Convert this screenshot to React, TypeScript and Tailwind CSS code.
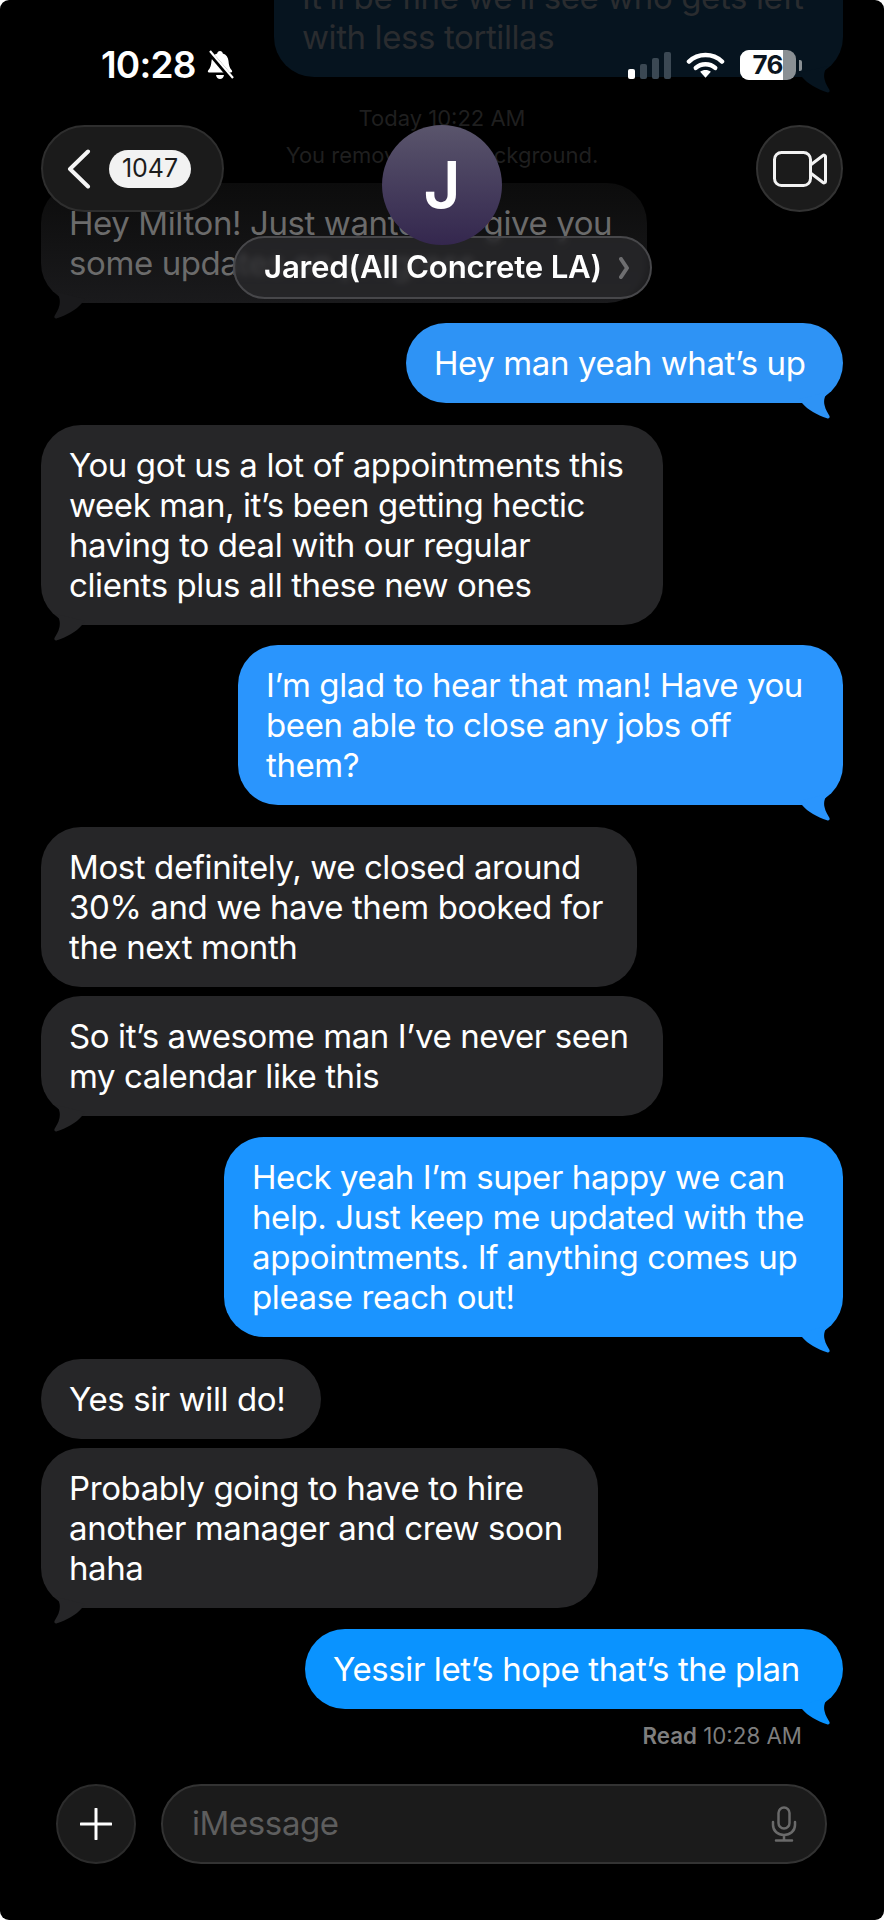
const FONT = "font-['Inter','Noto_Sans',sans-serif]";

function Tail({ side, color }: { side: "left" | "right"; color: string }) {
  return (
    <svg
      viewBox="0 0 46 34"
      className={`absolute bottom-[-16px] h-[34px] w-[46px] ${
        side === "right" ? "right-0" : "left-0 -scale-x-100"
      }`}
      fill={color}
    >
      <path d="M2 14 L31 7 C27.5 11 26.5 15 27.5 20 C28.5 25 31 28 32.5 31 C33.2 33 31.5 33.8 30 33.2 C20 30 11 25 5 18 Z" />
    </svg>
  );
}

function Bubble({
  side,
  width,
  bg,
  color,
  lines,
  tail = true,
}: {
  side: "left" | "right";
  width: string;
  bg: string;
  color: string;
  lines: string[];
  tail?: boolean;
}) {
  return (
    <div
      className={`relative rounded-[40px] py-5 pl-[28px] text-[33px] leading-[40px] tracking-[-0.4px] text-white ${width} ${bg} ${
        side === "right" ? "self-end" : "self-start"
      }`}
    >
      {lines.map((l) => (
        <div key={l} className="whitespace-nowrap">
          {l}
        </div>
      ))}
      {tail && <Tail side={side} color={color} />}
    </div>
  );
}

function StatusBar() {
  return (
    <div className="absolute left-0 right-0 top-[50px] flex h-[30px] items-center pl-[101px] pr-[82px]">
      <span className="text-[37px] font-semibold leading-[30px] tracking-[-0.8px] text-white">10:28</span>
      <svg viewBox="0 0 28 30" className="ml-[10px] h-[30px] w-[28px]" fill="white">
        <path d="M14 1c1.6 0 2.6 1 2.8 2.5 3.5 1 5.4 4 5.7 7.6.3 4 1 6.8 3.4 9.4.6.7.2 2-.9 2H3c-1.100 0-1.500-1.300-.9-2 2.400-2.600 3.100-5.400 3.400-9.400.3-3.600 2.200-6.600 5.700-7.600C11.400 2 12.400 1 14 1z" />
        <path d="M10 25h8c-.4 2.400-2 4-4 4s-3.600-1.600-4-4z" />
        <path d="M3 2 L26 29" stroke="black" strokeWidth="5" />
        <path d="M4 1 L27 28" stroke="white" strokeWidth="2.200" />
      </svg>
      <div className="ml-auto flex h-[28px] items-end gap-[5px]">
        <span className="h-[10px] w-[7px] rounded-[2px] bg-white" />
        <span className="h-[15px] w-[7px] rounded-[2px] bg-[#3b4853]" />
        <span className="h-[21px] w-[7px] rounded-[2px] bg-[#3b4853]" />
        <span className="h-[27px] w-[7px] rounded-[2px] bg-[#3b4853]" />
      </div>
      <svg viewBox="0 0 40 28" className="ml-[15px] h-[28px] w-[39px]" fill="none" stroke="white" strokeLinecap="round">
        <path d="M3 10.500C12.500 1.500 27.500 1.500 37 10.500" strokeWidth="4.500" />
        <path d="M10 17C15.500 12 24.500 12 30 17" strokeWidth="4.500" />
        <path d="M20 27l-5.500-6c3.200-2.400 7.800-2.400 11 0z" fill="white" stroke="none" />
      </svg>
      <div className="relative ml-[15px] flex h-[30px] w-[56px] items-center overflow-hidden rounded-[9px] bg-[#8a9094]">
        <div className="flex h-full w-[43px] items-center justify-end bg-white">
          <span className="text-[26px] font-bold leading-none tracking-[-0.5px] text-[#0b1520]">76</span>
        </div>
      </div>
      <span className="ml-[3px] h-[11px] w-[3px] rounded-r-[2px] bg-[#8a9094]" />
    </div>
  );
}

function Header() {
  return (
    <>
      <div className="absolute left-[41px] top-[125px] flex h-[87px] w-[183px] items-center rounded-full border-2 border-[#2e2e2e] bg-[#1b1b1b] pl-[24px]">
        <svg viewBox="0 0 24 40" className="h-[40px] w-[24px]" fill="none" stroke="#f5f5f5" strokeWidth="4" strokeLinecap="round" strokeLinejoin="round">
          <path d="M21 2.500L3 20l18 17.500" />
        </svg>
        <span className="ml-[18px] flex h-[38px] w-[82px] items-center justify-center rounded-full bg-[#f2f2f2] text-[25px] leading-none text-[#1c1c1c]">
          1047
        </span>
      </div>
      <div className="absolute left-[756px] top-[125px] flex h-[87px] w-[87px] items-center justify-center rounded-full border-2 border-[#333333] bg-[#1b1b1b]">
        <svg viewBox="0 0 54 36" className="h-[36px] w-[54px]" fill="none" stroke="#f2f2f2" strokeWidth="3" strokeLinejoin="round">
          <rect x="1.500" y="1.500" width="36" height="33" rx="7" />
          <path d="M37.500 14L50 4.500c1-.8 2.500-.2 2.500 1.100v24.800c0 1.300-1.500 1.900-2.500 1.100L37.500 22" />
        </svg>
      </div>
      <div className="absolute left-[233px] top-[236px] flex h-[63px] w-[419px] items-center rounded-full border-2 border-[#47474a] bg-[#2b2b2d]/70 pl-[29px] backdrop-blur-[3px]">
        <span className="whitespace-nowrap text-[31.200px] font-semibold leading-none tracking-[-0.2px] text-white">
          Jared(All Concrete LA)
        </span>
        <svg viewBox="0 0 10 22" className="ml-[17px] h-[22px] w-[10px]" fill="none" stroke="#6e6e70" strokeWidth="4" strokeLinecap="round" strokeLinejoin="round">
          <path d="M2 2l6 9-6 9" />
        </svg>
      </div>
      <div className="absolute left-[382px] top-[125px] flex h-[120px] w-[120px] items-center justify-center rounded-full bg-gradient-to-b from-[#5a556c] to-[#34274e] text-[64px] font-semibold leading-none text-white">
        J
      </div>
    </>
  );
}

function Composer() {
  return (
    <div className="mt-[35px] flex items-center gap-[25px] pl-[15px] pr-[16px]">
      <div className="flex h-[80px] w-[80px] items-center justify-center rounded-full border-2 border-[#2c2c2c] bg-[#1b1b1b]">
        <svg viewBox="0 0 32 32" className="h-[32px] w-[32px]" stroke="white" strokeWidth="3" strokeLinecap="round">
          <path d="M16 1v30M1 16h30" />
        </svg>
      </div>
      <div className="flex h-[80px] flex-1 items-center justify-between rounded-full border-2 border-[#333333] bg-[#1b1b1b] pl-[29px] pr-[28px]">
        <span className="text-[33px] tracking-[-0.4px] text-[#5e5e5e]">iMessage</span>
        <svg viewBox="0 0 26 36" className="h-[36px] w-[26px]" fill="none" stroke="#6a6a6a" strokeWidth="2.500" strokeLinecap="round">
          <rect x="7.500" y="1.500" width="11" height="21" rx="5.500" />
          <path d="M2 16v3c0 6 5 10 11 10s11-4 11-10v-3M13 29v5M5 34.500h16" />
        </svg>
      </div>
    </div>
  );
}

export default function App() {
  return (
    <div className={`h-[1920px] w-[884px] bg-white ${FONT}`}>
      <div className="relative h-full w-full overflow-hidden rounded-[9px] bg-black">
        <div className="flex flex-col px-[41px]">
          {/* messages under the header, almost faded out */}
          <div className="relative -mt-[43px] w-[569px] self-end rounded-[40px] bg-[#06141f] py-5 pl-[28px] text-[33px] leading-[40px] tracking-[-0.4px] text-[#2a2c2f]">
            <div className="whitespace-nowrap">It’ll be fine we’ll see who gets left</div>
            <div className="whitespace-nowrap">with less tortillas</div>
            <Tail side="right" color="#06141f" />
          </div>
          <div className="mt-[28px] text-center text-[22px] leading-[26px] text-[#1f1f1f]">Today 10:22 AM</div>
          <div className="mt-[11px] text-center text-[22px] leading-[26px] text-[#1f1f1f]">You removed the background.</div>
          <div className="relative mt-[15px] w-[606px] self-start rounded-[40px] bg-gradient-to-b from-[#0c0c0c] to-[#1a1a1c] py-5 pl-[28px] text-[33px] leading-[40px] tracking-[-0.4px] text-[#6b6b6b]">
            <div className="whitespace-nowrap">Hey Milton! Just wanted to give you</div>
            <div className="whitespace-nowrap">some updates on progress</div>
            <Tail side="left" color="#1a1a1c" />
          </div>

          <div className="mt-[20px] flex flex-col">
            <Bubble side="right" width="w-[437px]" bg="bg-[#2e93f5]" color="#2e93f5" lines={["Hey man yeah what’s up"]} />
            <div className="h-[22px]" />
            <Bubble side="left" width="w-[622px]" bg="bg-[#262628]" color="#262628" lines={["You got us a lot of appointments this", "week man, it’s been getting hectic", "having to deal with our regular", "clients plus all these new ones"]} />
            <div className="h-[20px]" />
            <Bubble side="right" width="w-[605px]" bg="bg-[#2a95fd]" color="#2a95fd" lines={["I’m glad to hear that man! Have you", "been able to close any jobs off", "them?"]} />
            <div className="h-[22px]" />
            <Bubble side="left" tail={false} width="w-[596px]" bg="bg-[#262628]" color="#262628" lines={["Most definitely, we closed around", "30% and we have them booked for", "the next month"]} />
            <div className="h-[9px]" />
            <Bubble side="left" width="w-[622px]" bg="bg-[#262628]" color="#262628" lines={["So it’s awesome man I’ve never seen", "my calendar like this"]} />
            <div className="h-[21px]" />
            <Bubble side="right" width="w-[619px]" bg="bg-[#1b94ff]" color="#1b94ff" lines={["Heck yeah I’m super happy we can", "help. Just keep me updated with the", "appointments. If anything comes up", "please reach out!"]} />
            <div className="h-[22px]" />
            <Bubble side="left" tail={false} width="w-[280px]" bg="bg-[#262628]" color="#262628" lines={["Yes sir will do!"]} />
            <div className="h-[9px]" />
            <Bubble side="left" width="w-[557px]" bg="bg-[#262628]" color="#262628" lines={["Probably going to have to hire", "another manager and crew soon", "haha"]} />
            <div className="h-[21px]" />
            <Bubble side="right" width="w-[538px]" bg="bg-[#0a93ff]" color="#0a93ff" lines={["Yessir let’s hope that’s the plan"]} />
          </div>

          <div className="mt-[14px] pr-[41px] text-right text-[22.300px] leading-[26px] text-[#7e7e7e]">
            <span className="font-semibold">Read</span> 10:28 AM
          </div>
          <Composer />
        </div>
        <StatusBar />
        <Header />
      </div>
    </div>
  );
}
